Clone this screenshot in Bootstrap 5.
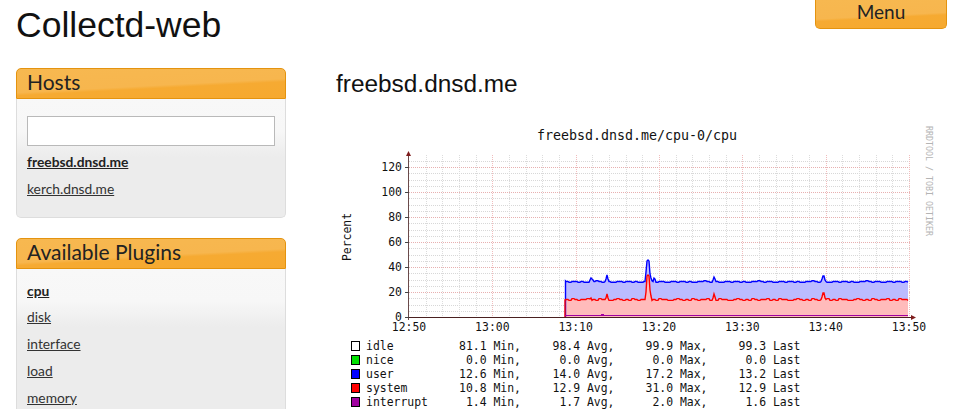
<!DOCTYPE html>
<html lang="en">
<head>
  <meta charset="UTF-8">
  <meta name="viewport" content="width=device-width, initial-scale=1.0">
  <title>Collectd-web</title>

  <link href="https://cdn.jsdelivr.net/npm/bootstrap@5.3.1/dist/css/bootstrap.min.css" rel="stylesheet">
  <script src="https://cdn.jsdelivr.net/npm/bootstrap@5.3.1/dist/js/bootstrap.bundle.min.js"></script>

  <style>
    html, body { overflow: hidden; height: 409px; }
    body { font-family: "Lato", sans-serif; color: #222; background: #fff; }
    .page-wrap { padding: 0 12px 0 16px; }
    .site-title { font-family: "Liberation Sans", sans-serif; font-size: 35.5px; line-height: 41px; margin: 5px 0 0; color: #111; }
    .orange-bar {
      background: linear-gradient(177deg, #f7b850 0%, #f7b64e 55%, #f6aa32 62%, #f6a92f 100%);
      border: 1px solid #e4930f;
    }
    .menu-btn {
      width: 132px; height: 29px; padding: 0 0 5px; font-size: 19px; line-height: 23px; color: #222;
      border-top: 0; border-radius: 0 0 5px 5px;
    }
    .menu-btn:hover { color: #222; border-color: #e4930f; }
    .side-col { width: 270px; flex: none; margin-top: 22px; }
    .main-col { margin-left: 50px; flex: 1; }
    .side-box { margin-bottom: 20px; }
    .first-box { margin-top: 46px; }
    .side-head { height: 31px; padding: 0 10px; font-size: 21px; line-height: 26px; border-radius: 5px 5px 0 0; color: #222; margin: 0; font-weight: 400; }
    .side-body {
      padding: 17px 10px 14px; border: 1px solid #ddd; border-top: 0; border-radius: 0 0 5px 5px;
      background: linear-gradient(180deg, #f8f8f8 0, #f7f7f7 32px, #ececec 58px, #ececec 100%);
    }
    .plugin-body { padding-top: 9px; }
    .host-input { height: 30px; border: 1px solid #b9b9b9; border-radius: 0; padding: 2px 6px; }
    .side-link { display: block; font-size: 13.8px; line-height: 26.8px; color: #333; text-decoration: underline; }
    .side-link.sel { font-weight: 700; color: #222; }
    .link-list { margin-top: 3px; }
    .host-title { font-family: "Liberation Sans", sans-serif; font-size: 24.4px; line-height: 28px; margin: 41px 0 0; color: #111; font-weight: 400; }
    .rrd-graph { display: block; margin-top: 22px; }
    .rrd-graph text { font-family: "DejaVu Sans Mono", monospace; font-size: 11.45px; fill: #111; white-space: pre; }
    .rrd-graph .rrd-title { font-size: 13.3px; }
    .rrd-graph .rrd-credit { font-size: 8.3px; fill: #b4b4b4; }
  </style>
</head>

<body>
  <div class="page-wrap d-flex">
    <div class="side-col">
      <h1 class="site-title position-absolute top-0">Collectd-web</h1>

      <div class="side-box first-box">
        <h4 class="side-head orange-bar">Hosts</h4>
        <div class="side-body">
          <input type="text" class="form-control host-input">
          <div class="link-list">
            <a href="#" class="side-link sel">freebsd.dnsd.me</a>
            <a href="#" class="side-link">kerch.dnsd.me</a>
          </div>
        </div>
      </div>

      <div class="side-box">
        <h4 class="side-head orange-bar">Available Plugins</h4>
        <div class="side-body plugin-body">
          <a href="#" class="side-link sel">cpu</a>
          <a href="#" class="side-link">disk</a>
          <a href="#" class="side-link">interface</a>
          <a href="#" class="side-link">load</a>
          <a href="#" class="side-link">memory</a>
        </div>
      </div>
    </div>

    <div class="main-col">
      <div class="d-flex justify-content-end">
        <a href="#" class="btn menu-btn orange-bar">Menu</a>
      </div>
      <h2 class="host-title">freebsd.dnsd.me</h2>
      <svg id="graph" class="rrd-graph" width="610" height="300" viewBox="336 120 610 300" xmlns="http://www.w3.org/2000/svg"></svg>
    </div>
  </div>

  <script>
    const x0 = 409, y0 = 317, pxPerMin = 500 / 60;
    let out = '';

    // minor grid
    for (let k = 0; k <= 25; k++) {
      if (k % 4 === 0) continue;
      const y = Math.round(y0 - k * 6.25) + 0.5;
      out += `<line x1="${x0}" x2="911" y1="${y}" y2="${y}" stroke="#d8d8d8" stroke-dasharray="1 1" shape-rendering="crispEdges"/>`;
    }
    for (let m = 2; m <= 60; m += 2) {
      if (m % 10 === 0) continue;
      const x = Math.round(x0 + m * pxPerMin) + 0.5;
      out += `<line x1="${x}" x2="${x}" y1="155" y2="${y0}" stroke="#dcdcdc" stroke-dasharray="1 1" shape-rendering="crispEdges"/>`;
    }
    // major grid
    for (let k = 1; k <= 6; k++) {
      const y = Math.round(y0 - k * 25) + 0.5;
      out += `<line x1="${x0}" x2="911" y1="${y}" y2="${y}" stroke="#e8b0b0" stroke-dasharray="1 1" shape-rendering="crispEdges"/>`;
    }
    for (let m = 10; m <= 60; m += 10) {
      const x = Math.round(x0 + m * pxPerMin) + 0.5;
      out += `<line x1="${x}" x2="${x}" y1="155" y2="${y0}" stroke="#f0bcbc" stroke-dasharray="1 1" shape-rendering="crispEdges"/>`;
    }

    // data, one sample per px from 566, baseline wobbles every 3px
    const wobbleA = [0,1,0,0,1,0,1,1,0,0,-1,0,1,0,0,1,1,0];
    const wobbleB = [0,1,-1,0,1,0,0,-1,1,0,1,-1,0,0,1,1,0,-1,0,1];
    const blueSpike = { 590: 280, 591: 278, 592: 279, 593: 280, 606: 279, 607: 275, 608: 279,
      646: 272, 647: 261, 648: 260, 649: 261, 650: 274, 651: 278, 654: 278, 655: 279,
      713: 280, 714: 277, 715: 279, 822: 279, 823: 276, 824: 276, 825: 280 };
    const redSpike = { 590: 299, 591: 298, 606: 298, 607: 294, 608: 298,
      646: 292, 647: 276, 648: 275, 649: 276, 650: 290, 651: 296,
      713: 298, 714: 294, 715: 297, 822: 297, 823: 293, 824: 293, 825: 298 };
    let blue = [], red = [];
    for (let x = 566, i = 0; x <= 908; x += 1, i++) {
      blue.push([x, blueSpike[x] || 281.5 + wobbleA[Math.floor(i / 3) % 18] * 0.7]);
      red.push([x, redSpike[x] || 299.5 + wobbleB[Math.floor(i / 3) % 20] * 0.9]);
    }
    const pts = a => a.map(p => p.join(',')).join(' ');
    const redBack = red.slice().reverse();
    out += `<polygon points="566,${y0} ${pts(red)} 908,${y0}" fill="#ffbbbb"/>`;
    out += `<polygon points="${pts(blue)} ${pts(redBack)}" fill="#bbbbff"/>`;
    out += `<polyline points="565.5,${y0} 565.5,281 ${pts(blue)}" fill="none" stroke="#0000ff" stroke-width="1.4"/>`;
    out += `<polyline points="565,${y0} 565,300 ${pts(red)}" fill="none" stroke="#ff0000" stroke-width="1.4"/>`;
    out += `<line x1="565" x2="908" y1="315.5" y2="315.5" stroke="#a000a0" shape-rendering="crispEdges"/>`;
    out += `<line x1="601" x2="604" y1="314.5" y2="314.5" stroke="#a000a0" shape-rendering="crispEdges"/>`;

    // axes and arrows
    out += `<line x1="${x0 - 3}" x2="913" y1="317.5" y2="317.5" stroke="#4a2020" shape-rendering="crispEdges"/>`;
    out += `<line x1="408.5" x2="408.5" y1="155" y2="320" stroke="#6a4a4a" shape-rendering="crispEdges"/>`;
    out += `<polygon points="406,156 411,156 408.5,151" fill="#7f1d1d"/>`;
    out += `<polygon points="911,315 911,320 916,317.5" fill="#7f1d1d"/>`;

    // labels
    for (let k = 0; k <= 6; k++) {
      const y = y0 - k * 25;
      out += `<line x1="405" x2="409" y1="${y + 0.5}" y2="${y + 0.5}" stroke="#444" shape-rendering="crispEdges"/>`;
      out += `<text x="402" y="${y + 4}" text-anchor="end">${k * 20}</text>`;
    }
    ['12:50', '13:00', '13:10', '13:20', '13:30', '13:40', '13:50'].forEach((t, i) => {
      out += `<text x="${x0 + i * 500 / 6}" y="330.5" text-anchor="middle">${t}</text>`;
    });
    out += `<text class="rrd-title" x="637" y="140" text-anchor="middle">freebsd.dnsd.me/cpu-0/cpu</text>`;
    out += `<text x="351" y="237" text-anchor="middle" transform="rotate(-90 351 237)">Percent</text>`;
    out += `<text class="rrd-credit" x="181" y="-926" text-anchor="middle" transform="rotate(90)">RRDTOOL / TOBI OETIKER</text>`;

    // legend
    const legend = [
      ['idle', '#ffffff', '81.1', '98.4', '99.9', '99.3'],
      ['nice', '#00e000', ' 0.0', ' 0.0', ' 0.0', ' 0.0'],
      ['user', '#0000ff', '12.6', '14.0', '17.2', '13.2'],
      ['system', '#ff0000', '10.8', '12.9', '31.0', '12.9'],
      ['interrupt', '#a000a0', ' 1.4', ' 1.7', ' 2.0', ' 1.6']
    ];
    legend.forEach((r, i) => {
      const y = 350 + i * 14;
      out += `<rect x="351.5" y="${y - 8.5}" width="8" height="9" fill="${r[1]}" stroke="#000" shape-rendering="crispEdges"/>`;
      out += `<text x="366" y="${y}">${r[0]}</text>`;
      out += `<text x="459" y="${y}">${r[2]} Min,</text>`;
      out += `<text x="552.5" y="${y}">${r[3]} Avg,</text>`;
      out += `<text x="645.5" y="${y}">${r[4]} Max,</text>`;
      out += `<text x="738.5" y="${y}">${r[5]} Last</text>`;
    });

    document.getElementById('graph').innerHTML = out;
  </script>
</body>
</html>
